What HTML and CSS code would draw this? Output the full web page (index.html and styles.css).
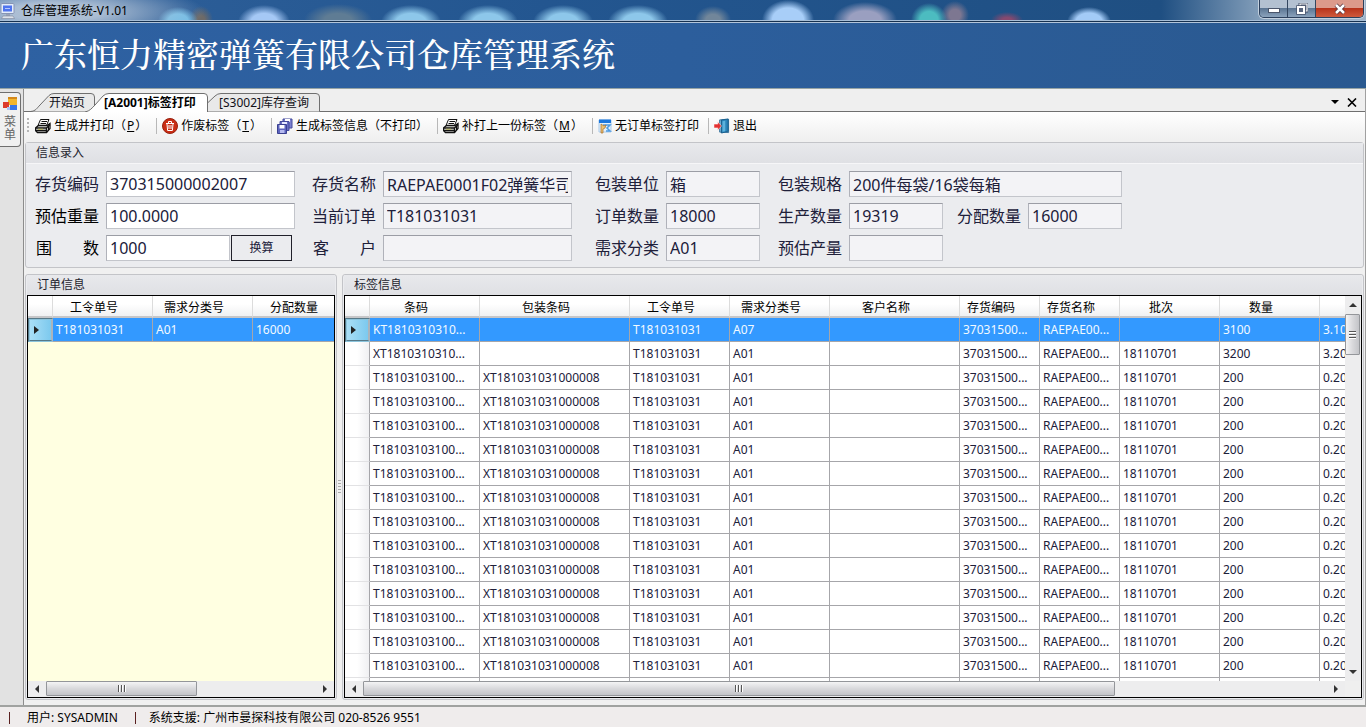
FILE: index.html
```
<!DOCTYPE html>
<html lang="zh-CN">
<head>
<meta charset="utf-8">
<title>仓库管理系统-V1.01</title>
<link rel="stylesheet" href="styles.css">
</head>
<body>
<svg class="defs" width="0" height="0" aria-hidden="true">
  <symbol id="printer" viewBox="0 0 16 16">
    <path d="M5.500 1.500H14L11.500 7.500H3z" fill="#fff" stroke="#111"/>
    <path d="M6.500 3.500H12M5.500 5.500H11" stroke="#111"/>
    <path d="M3.500 7.500H12L15 5.500V10.500L11.500 14.500H2.500L.5 12.500V10z" fill="#e4e4e0" stroke="#111" stroke-width="1.300"/>
    <path d="M1 10H11.500L15 6.500M1 12.500H11.500M11.500 10V14.500" stroke="#111" fill="none" stroke-width="1.400"/>
    <path d="M13.500 8V12.500" stroke="#111"/>
    <path d="M3 11.200H8" stroke="#b9b453"/>
  </symbol>
</svg>
<div class="app">
  <header class="titlebar">
    <svg class="titlebar-icon" width="15" height="16" viewBox="0 0 15 16" aria-hidden="true"><rect x="1" y="0.500" width="13" height="10" rx="1" fill="#e4ecfa" stroke="#8795b4"/><rect x="3" y="2.500" width="9" height="6" fill="#4f74ee"/><path d="M5 5h5v1H5z" fill="#b4c7ff"/><path d="M6 11h4v2H6z" fill="#98a2b8"/><path d="M3 13h10l1.500 2.500H1.500z" fill="#dde2ea" stroke="#7d879b" stroke-width=".6"/></svg>
    <span class="titlebar-text">仓库管理系统-V1.01</span>
    <div class="window-buttons">
      <button type="button" class="wb" aria-label="最小化"><svg width="12" height="12" viewBox="0 0 12 12"><rect x=".5" y="5.500" width="11" height="4" fill="#fff" stroke="#4b566b"/></svg></button>
      <button type="button" class="wb" aria-label="还原"><svg width="12" height="12" viewBox="0 0 12 12"><path d="M4 3V1h7v7H9" fill="none" stroke="#46526a" stroke-width="3"/><path d="M4 3V1h7v7H9" fill="none" stroke="#fff" stroke-width="1.200"/><rect x="2" y="4" width="6" height="6" fill="#59667e" stroke="#46526a" stroke-width="3.500"/><rect x="2" y="4" width="6" height="6" fill="#59667e" stroke="#fff" stroke-width="2"/></svg></button>
      <button type="button" class="wb wb-close" aria-label="关闭"><svg width="12" height="12" viewBox="0 0 12 12"><path d="M2 2l8 8M10 2l-8 8" stroke="#52303a" stroke-width="4"/><path d="M2 2l8 8M10 2l-8 8" stroke="#fff" stroke-width="2.500"/></svg></button>
    </div>
  </header>
  <h1 class="banner">广东恒力精密弹簧有限公司仓库管理系统</h1>
  <div class="workspace">
    <aside class="dock">
      <button type="button" class="dock-tab">
        <svg width="14" height="14" viewBox="0 0 14 14" aria-hidden="true"><rect x="5" y="0" width="9" height="8" fill="#f3b52c"/><rect x="5" y="0" width="9" height="2" fill="#d4881a"/><rect x="0" y="5" width="6" height="6" fill="#dc3b2c"/><rect x="7" y="8" width="7" height="5" fill="#3875e8"/><rect x="4" y="10" width="3" height="3" fill="#a9c4f5"/></svg>
        <span>菜<br>单</span>
      </button>
    </aside>
    <main class="content">
      <nav class="tabs">
        <button type="button" class="tab tab-start"><svg width="65" height="19" viewBox="0 0 65 19" aria-hidden="true"><path d="M.5 18.500C6 18 7 15 10 12L19 2.500Q21 .5 24 .5H61Q64.500 .5 64.500 4V18.500" fill="#e9e9e9" stroke="#6f6f6f"/></svg><span>开始页</span></button>
        <button type="button" class="tab tab-active"><svg width="123" height="19" viewBox="0 0 123 19" aria-hidden="true"><path d="M0 19C5 18 7 15 10 12L18 3Q20.500 .5 24 .5H119Q122.500 .5 122.500 4V19" fill="#fff" stroke="#6f6f6f"/></svg><span>[A2001]标签打印</span></button>
        <button type="button" class="tab tab-query"><svg width="113" height="19" viewBox="0 0 113 19" aria-hidden="true"><path d="M.5 18.500V10L8 3Q10.500 .5 14 .5H109Q112.500 .5 112.500 4V18.500" fill="#e9e9e9" stroke="#6f6f6f"/></svg><span>[S3002]库存查询</span></button>
        <div class="tab-tools">
          <button type="button" aria-label="窗口列表"><svg width="8" height="4" viewBox="0 0 8 4"><path d="M0 0h8L4 4z"/></svg></button>
          <button type="button" aria-label="关闭页"><svg width="10" height="9" viewBox="0 0 10 9"><path d="M1 .5l8 8M9 .5l-8 8" stroke="#000" stroke-width="1.600"/></svg></button>
        </div>
      </nav>
      <div class="toolbar">
        <i class="grip"></i>
        <button type="button" class="tool"><svg width="16" height="16"><use href="#printer"/></svg>生成并打印（<u>P</u>）</button>
        <button type="button" class="tool"><svg width="16" height="16" viewBox="0 0 16 16"><circle cx="8" cy="8" r="7.500" fill="#c92d14" stroke="#98200e"/><path d="M4 5.500h8M6.500 5V3.500h3V5M5 6l.6 6.500h4.800L11 6M7 7v4M9 7v4" stroke="#fff" fill="none"/></svg>作废标签（<u>T</u>）</button>
        <button type="button" class="tool"><svg width="16" height="16" viewBox="0 0 16 16"><path d="M6 1h9v9H6z" fill="#7b80cf" stroke="#444a9c"/><path d="M8 1h5v3H8z" fill="#fff"/><path d="M3 3.500h9v9H3z" fill="#686ec2" stroke="#444a9c"/><path d="M5 4h5v3H5z" fill="#e6e9ff"/><path d="M.5 6.500h9v9h-9z" fill="#5d64be" stroke="#3a4090"/><path d="M2.500 7h5v3.500h-5z" fill="#fff"/><path d="M3 12h4.500v3H3z" fill="#b6baf0"/></svg>生成标签信息（不打印）</button>
        <button type="button" class="tool"><svg width="16" height="16"><use href="#printer"/></svg>补打上一份标签（<u>M</u>）</button>
        <button type="button" class="tool"><svg width="14" height="16" viewBox="0 0 14 16"><path d="M1 2h12v12H1z" fill="#e3f1fd" stroke="#a9c9e8"/><path d="M1 1.500h12V5H1z" fill="#1b76dc"/><path d="M5 7h7l-3 3 3 3H8" fill="none" stroke="#4e9be2" stroke-width="1.500"/><path d="M3 6l3 2 2-1-1 3-2 1v4H3v-5z" fill="#ecc275" stroke="#a86f2a" stroke-width=".7"/></svg>无订单标签打印</button>
        <button type="button" class="tool"><svg width="16" height="16" viewBox="0 0 17 16"><path d="M6 1.500 15.500 1v14L6 14.500z" fill="#79b4d8" stroke="#38719b"/><path d="M8 1.500 15 .5v13L8 15.500z" fill="#2a83b8" stroke="#195f8d"/><path d="M9 3l3-.5v11L9 14z" fill="#5db2dc"/><path d="M0 6h4V3.500L8 8l-4 4.500V10H0z" fill="#e43131" stroke="#fff" stroke-width=".5"/></svg>退出</button>
      </div>
      <section class="group entry">
        <h2>信息录入</h2>
        <form class="fields">
          <label for="f1">存货编码</label><input id="f1" value="370315000002007">
          <label for="f2">存货名称</label><input id="f2" value="RAEPAE0001F02弹簧华司" readonly>
          <label for="f3">包装单位</label><input id="f3" value="箱" readonly>
          <label for="f4">包装规格</label><input id="f4" class="wide" value="200件每袋/16袋每箱" readonly>
          <label for="f5" class="dark">预估重量</label><input id="f5" value="100.0000">
          <label for="f6">当前订单</label><input id="f6" value="T181031031" readonly>
          <label for="f7">订单数量</label><input id="f7" value="18000" readonly>
          <label for="f8">生产数量</label><input id="f8" value="19319" readonly>
          <label for="f9">分配数量</label><input id="f9" value="16000" readonly>
          <label for="f10" class="dark spread"><span>围</span><span>数</span></label><div class="convert"><input id="f10" value="1000"><button type="button">换算</button></div>
          <label for="f11" class="spread"><span>客</span><span>户</span></label><input id="f11" readonly>
          <label for="f12">需求分类</label><input id="f12" value="A01" readonly>
          <label for="f13">预估产量</label><input id="f13" readonly>
        </form>
      </section>
      <div class="panels">
        <section class="group orders">
          <h2>订单信息</h2>
          <div class="grid">
            <div class="view cream">
              <table class="t-orders">
                <colgroup><col class="c24"><col class="c100"><col class="c100"><col class="c100"></colgroup>
                <thead><tr><th></th><th>工令单号</th><th>需求分类号</th><th>分配数量</th></tr></thead>
                <tbody><tr class="sel"><th scope="row"><i class="cur"></i></th><td>T181031031</td><td>A01</td><td>16000</td></tr></tbody>
              </table>
            </div>
            <div class="hbar"><button type="button" class="arr left" aria-label="向左"></button><div class="track"><span class="thumb t-a"><i></i></span></div><button type="button" class="arr right" aria-label="向右"></button></div>
          </div>
        </section>
        <div class="splitter"><i></i></div>
        <section class="group labels">
          <h2>标签信息</h2>
          <div class="grid grid-v">
            <div class="view">
              <table class="t-labels">
                <colgroup><col class="c24"><col class="c110"><col class="c150"><col class="c100"><col class="c100"><col class="c130"><col class="c80"><col class="c80"><col class="c100"><col class="c100"><col class="c100"></colgroup>
                <thead><tr><th></th><th>条码</th><th>包装条码</th><th>工令单号</th><th>需求分类号</th><th>客户名称</th><th>存货编码</th><th>存货名称</th><th>批次</th><th>数量</th><th></th></tr></thead>
                <tbody id="rows"></tbody>
              </table>
            </div>
            <div class="vbar"><button type="button" class="arr up" aria-label="向上"></button><div class="track"><span class="thumb"><i></i></span></div><button type="button" class="arr down" aria-label="向下"></button></div>
            <div class="hbar"><button type="button" class="arr left" aria-label="向左"></button><div class="track"><span class="thumb t-b"><i></i></span></div><button type="button" class="arr right" aria-label="向右"></button></div>
          </div>
        </section>
      </div>
    </main>
  </div>
  <footer class="status"><i></i><span>用户: SYSADMIN</span><i></i><span>系统支援: 广州市曼探科技有限公司 020-8526 9551</span></footer>
</div>
<script src="rows.js"></script>
</body>
</html>
```
FILE: styles.css
```
* { box-sizing: border-box; }
body { margin: 0; font: 12px/16px "Noto Sans", "Noto Sans CJK SC", sans-serif; color: #101018; background: #efeeee; }
button, input { font: inherit; color: inherit; margin: 0; }
button { padding: 0; border: 0; background: none; }
.defs { position: absolute; }
.app { display: flex; flex-direction: column; height: 100vh; min-height: 480px; overflow: hidden; }

.titlebar {
  display: flex; align-items: center; gap: 6px; flex: none; height: 23px; 
  border-bottom: 1px solid #b3c5da; box-shadow: inset 0 -1px #16304f, inset 0 -2px #a5bdd6;
  background:
    radial-gradient(ellipse 150px 30px at 55px 12px, #b9c8dae6 30%, transparent),
    radial-gradient(ellipse 20px 14px at 178px 21px, #72bde6 50%, transparent),
    radial-gradient(ellipse 12px 14px at 201px 20px, #6d6a68 30%, transparent),
    radial-gradient(ellipse 26px 17px at 264px 22px, #a5c8f5 50%, transparent),
    radial-gradient(ellipse 34px 16px at 338px 20px, #5f7c94 40%, transparent),
    radial-gradient(ellipse 30px 17px at 411px 22px, #8dc7ea 50%, transparent),
    radial-gradient(ellipse 30px 17px at 488px 22px, #8dc7ea 50%, transparent),
    radial-gradient(ellipse 30px 17px at 563px 22px, #8dc7ea 50%, transparent),
    radial-gradient(ellipse 30px 17px at 638px 22px, #8dc7ea 50%, transparent),
    radial-gradient(ellipse 18px 14px at 713px 20px, #71869a 40%, transparent),
    radial-gradient(ellipse 26px 20px at 788px 20px, #a8cef8 60%, transparent),
    radial-gradient(ellipse 32px 18px at 865px 20px, #9a9fc0 50%, transparent),
    radial-gradient(ellipse 18px 17px at 929px 20px, #4cbcc0 50%, transparent),
    radial-gradient(ellipse 14px 14px at 955px 15px, #7d7791 40%, transparent),
    radial-gradient(ellipse 16px 8px at 1007px 20px, #86496f 30%, transparent),
    radial-gradient(ellipse 22px 15px at 1089px 22px, #a3cbf7 60%, transparent),
    linear-gradient(90deg, #2f609a, #235690 40%, #1f4f82 85%, #8da6bf 93%, #9eb2c8);
}
.titlebar-icon { flex: none; }
.titlebar-text { color: #000; }
.window-buttons { display: flex; align-self: flex-start; margin-left: auto; margin-right: 2px; height: 18px; border: 1px solid #2c405c; border-top: 0; border-radius: 0 0 5px 5px; overflow: hidden; box-shadow: 0 0 0 1px #c3d0de; }
.wb { display: grid; place-items: center; width: 28px; background: linear-gradient(#b3c1d1 45%, #5c7693 50%, #8ba3bc); border-right: 1px solid #33465f; }
.wb-close { width: 47px; border: 0; background: linear-gradient(#dc9a8b 45%, #b8341c 50%, #cf5a3c); }

.banner { flex: none; margin: 0; padding: 10px 21px 15px; border-bottom: 1px solid #97a4a4; color: #fff; font: 500 33px/40px "Noto Serif CJK SC", "Noto Serif SC", "Noto Sans CJK SC", serif; background: linear-gradient(90deg, #2e61a2, #2c5e9c 50%, #2a5990); }

.workspace { display: flex; flex: 1; min-height: 0; border-bottom: 2px solid #a0a2a0; }
.dock { flex: none; width: 23px; padding-top: 3px; background: #e2e2e2; }
.dock-tab { display: flex; flex-direction: column; align-items: center; gap: 4px; width: 21px; height: 55px; padding-top: 4px; border: 1px solid #6f6f6f; border-left: 0; border-radius: 0 4px 4px 0; background: #f0f0f0; color: #666; line-height: 13px; }
.content { display: flex; flex-direction: column; flex: 1; min-width: 0; border-left: 1px solid #8c8c8c; border-right: 1px solid #a0a0a0; background: #f0f0f0; }

.tabs { display: flex; flex: none; height: 23px; padding: 4px 8px 0 6px; border-bottom: 1px solid #6f6f6f; background: #efefef; }
.tab { position: relative; height: 19px; text-align: left; line-height: 16px; white-space: nowrap; }
.tab svg { position: absolute; left: 0; top: 0; }
.tab span { position: relative; }
.tab-start { width: 65px; padding-left: 19px; }
.tab-active { z-index: 1; width: 123px; margin-left: -10px; padding-left: 19px; color: #000; font-weight: 700; font-size: 12px; }
.tab-query { width: 113px; margin-left: -1px; padding-left: 12px; }
.tab-tools { display: flex; align-items: center; gap: 8px; margin-left: auto; }
.tab-tools button { display: grid; place-items: center; }

.toolbar { display: flex; align-items: center; flex: none; height: 27px; padding-left: 3px; color: #000; background: linear-gradient(#fff, #f0f0f0); white-space: nowrap; }
.grip { width: 2px; height: 15px; margin-right: 6px; background: repeating-linear-gradient(#b5b5b5 0 2px, transparent 2px 4px); }
.tool { display: flex; align-items: center; height: 16px; padding-right: 9px; }
.tool + .tool { padding-left: 5px; border-left: 1px solid #b8b8b8; }
.tool svg { margin-right: 3px; }
.tool u { margin: 0 1px; }

.group { border: 1px solid #c3c4c8; border-radius: 3px; background: #ebecef; }
.group h2 { margin: 0; padding: 1px 10px 2px; color: #1e1e2e; font-size: 12px; font-weight: 400; line-height: 17px; background: linear-gradient(#e8e9ec, #dfe0e4); }
.entry { flex: none; margin: 3px 1px 0; }
.entry h2 { border-bottom: 1px solid #f6f6f8; }
.fields { display: grid; grid-template-columns: 71px 189px 17px 71px 189px 23px 71px 94px 18px 71px 94px 14px 71px 94px; grid-auto-rows: 26px; row-gap: 6px; align-items: center; padding: 7px 9px 6px; font-size: 16px; line-height: 24px; color: #20203a; }
.fields label { white-space: nowrap; }
.fields .dark { color: #000; }
.spread { display: flex; justify-content: space-between; padding: 0 7px 0 1px; }
.fields input { width: 100%; min-width: 0; height: 26px; padding: 0 3px; border: 1px solid #c3c5cb; border-top-color: #9b9da5; border-left-color: #b0b2ba; border-radius: 0; background: #fff; outline: 0; }
.fields input[readonly] { background: #f3f3f6; }
.fields label[for="f1"], .fields label[for="f5"], .fields label[for="f10"] { grid-column: 1; }
.fields label[for="f2"], .fields label[for="f6"], .fields label[for="f11"] { grid-column: 4; }
.fields label[for="f3"], .fields label[for="f7"], .fields label[for="f12"] { grid-column: 7; }
.fields label[for="f4"], .fields label[for="f8"], .fields label[for="f13"] { grid-column: 10; }
.fields label[for="f9"] { grid-column: 13; }
.fields .wide { grid-column: 11 / span 4; }
.convert { display: flex; gap: 1px; }
.convert input { flex: 1; }
.convert button { width: 61px; margin-right: 3px; border: 1px solid #20202a; font-size: 12px; line-height: 24px; }

.panels { display: flex; flex: 1; min-height: 0; margin: 6px 1px 5px; }
.panels .group { display: flex; flex-direction: column; min-width: 0; padding: 0 1px 1px; }
.orders { flex: none; width: 312px; }
.labels { flex: 1; }
.splitter { display: grid; place-items: center; width: 5px; }
.splitter i { width: 3px; height: 14px; background: repeating-linear-gradient(#aaa 0 1px, transparent 1px 3px); }
.grid { display: grid; flex: 1; min-height: 0; grid-template: minmax(0, 1fr) 16px / minmax(0, 1fr); border: 1px solid #000; background: #efefef; }
.grid-v { grid-template-columns: minmax(0, 1fr) 16px; }
.view { overflow: hidden; background: #fff; }
.cream { background: #ffffe1; }
table { border-collapse: separate; border-spacing: 0; table-layout: fixed; }
.t-orders { width: 325px; }
.t-labels { width: 1075px; }
.c24 { width: 25px; } .c80 { width: 80px; } .c100 { width: 100px; } .c110 { width: 110px; } .c130 { width: 130px; } .c150 { width: 150px; }
thead th { height: 22px; padding: 4px 17px 0 0; border-right: 1px solid #dcdcdc; border-bottom: 2px solid #c6c6c8; font-weight: 400; line-height: 16px; color: #000; background: linear-gradient(#fff 40%, #f0f1f2); white-space: nowrap; }
td, tbody th { height: 24px; padding: 1px 3px 0; border-right: 1px solid #a6a6aa; border-bottom: 1px solid #a6a6aa; line-height: 22px; white-space: nowrap; color: #20203a; }
tbody th { padding: 0; border-bottom-color: #e2e2e4; background: linear-gradient(90deg, #fff 50%, #f0f0f2); }
.sel td { color: #f2faff; background: #3399ff; }
.sel th { border: 2px groove #8cc4dc; border-right: 2px solid #aab4bc; background: linear-gradient(90deg, #a9def6, #7cc9ee); }
.cur { display: block; width: 0; height: 0; margin-left: 4px; border: 4px solid transparent; border-left: 5px solid #222; border-right: 0; }

.hbar, .vbar { display: flex; background: #ededee; }
.vbar { flex-direction: column; }
.arr { position: relative; flex: none; width: 18px; height: 16px; display: grid; place-items: center; }
.vbar .arr { width: 16px; height: 18px; }
.arr::before { content: ""; border: 4px solid transparent; }
.left::before { border-right-color: #333; border-left: 0; }
.right::before { border-left-color: #333; border-right: 0; }
.up::before { border-bottom-color: #333; border-top: 0; }
.down::before { border-top-color: #333; border-bottom: 0; }
.track { flex: 1; min-height: 0; }
.thumb { display: grid; place-items: center; height: 15px; border: 1px solid #94969a; border-radius: 1px; background: linear-gradient(#f4f4f5, #d9d9dc 50%, #c3c4c8); }
.thumb i { width: 8px; height: 7px; background: repeating-linear-gradient(90deg, #555 0 1px, #fff 1px 2px, transparent 2px 3px); }
.t-a { width: 56%; }
.t-b { width: 78%; }
.vbar .thumb { width: 15px; height: 41px; background: linear-gradient(90deg, #f4f4f5, #d9d9dc 50%, #c3c4c8); }
.vbar .thumb i { width: 7px; height: 8px; background: repeating-linear-gradient(#555 0 1px, #fff 1px 2px, transparent 2px 3px); }

.status { display: flex; align-items: center; flex: none; height: 20px; padding: 1px 9px 0; color: #000; background: #efecec; white-space: nowrap; }
.status i { width: 1px; height: 12px; margin-right: 13px; background: #5a2020; }
.status span { margin-right: 17px; }
.status i:first-child { margin-right: 17px; }
```
FILE: rows.js
```
const rows = [
  ['KT1810310310...', '', 'T181031031', 'A07', '', '37031500...', 'RAEPAE00...', '', '3100', '3.10'],
  ['XT1810310310...', '', 'T181031031', 'A01', '', '37031500...', 'RAEPAE00...', '18110701', '3200', '3.20']
];
for (let i = 0; i < 14; i++) {
  rows.push(['T18103103100...', 'XT181031031000008', 'T181031031', 'A01', '', '37031500...', 'RAEPAE00...', '18110701', '200', '0.20']);
}
const body = document.getElementById('rows');
rows.forEach((cells, index) => {
  const tr = body.insertRow();
  const head = document.createElement('th');
  head.scope = 'row';
  if (index === 0) {
    tr.className = 'sel';
    head.innerHTML = '<i class="cur"></i>';
  }
  tr.append(head);
  if (index === rows.length - 1) {
    cells = cells.map(() => '');
  }
  cells.forEach(text => { tr.insertCell().textContent = text; });
});
```
